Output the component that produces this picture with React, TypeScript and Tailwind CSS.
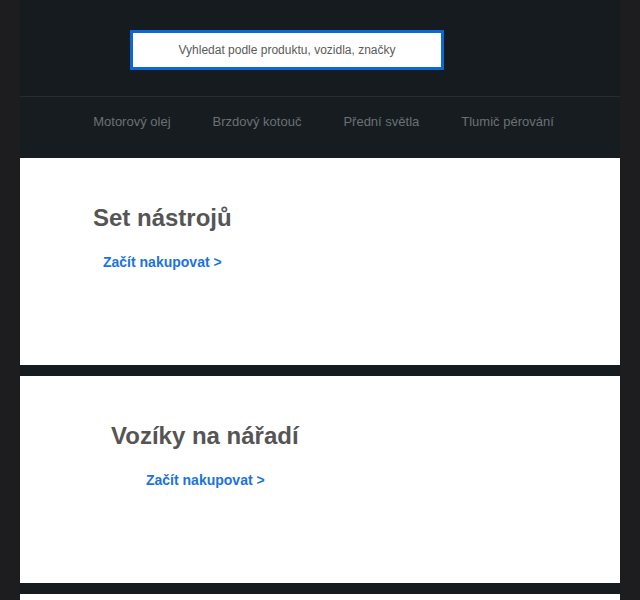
import React from "react"

const navItems = ["Motorový olej", "Brzdový kotouč", "Přední světla", "Tlumič pérování"]

const promos = [
  { title: "Set nástrojů", titlePad: "pl-[73px]", linkPad: "pl-[83px]" },
  { title: "Vozíky na nářadí", titlePad: "pl-[91px]", linkPad: "pl-[126px]" },
  { title: "", titlePad: "", linkPad: "" },
]

const App: React.FC = () => {
  return (
    <div className="min-h-screen bg-[#1d1d1f] px-[20px] font-['Liberation_Sans',Arial,sans-serif]">
      <div className="bg-[#161b1f]">
        {/* search */}
        <div className="h-[96px] pl-[110px] pt-[30px]">
          <div className="flex h-[40px] w-[314px] items-center justify-center border-[3px] border-[#0b68d6] bg-white">
            <span className="text-[12px] text-[#5a5a5a]">Vyhledat podle produktu, vozidla, značky</span>
          </div>
        </div>

        {/* categories */}
        <nav className="flex h-[62px] items-center justify-center gap-[42px] border-t border-[#252d33] bg-[#171c20] pb-[11px] pl-[7px] text-[13px] text-[#6b7176]">
          {navItems.map((item) => (
            <span key={item}>{item}</span>
          ))}
        </nav>

        {/* promo cards */}
        <div className="flex flex-col gap-[11px]">
          {promos.map((p, i) => (
            <section key={i} className="h-[207px] bg-white">
              {p.title && (
                <div className="pt-[45px]">
                  <h2 className={`${p.titlePad} text-[24px] font-bold leading-[30px] text-[#555]`}>{p.title}</h2>
                  <a href="#" className={`${p.linkPad} mt-[20px] block text-[14px] font-bold leading-[18px] text-[#1a73e0]`}>
                    Začít nakupovat &gt;
                  </a>
                </div>
              )}
            </section>
          ))}
        </div>
      </div>
    </div>
  )
}

export default App
